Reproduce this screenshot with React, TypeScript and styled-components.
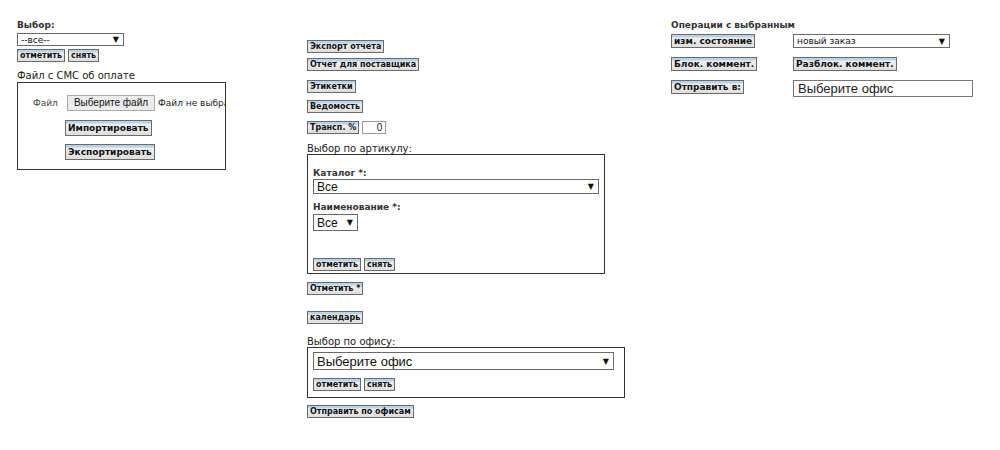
import styled, { createGlobalStyle } from "styled-components";

const GlobalStyle = createGlobalStyle`
  body {
    margin: 0;
    background: #fff;
    font-family: "DejaVu Sans", Verdana, sans-serif;
    color: #222;
  }
`;

const Page = styled.div`
  display: flex;
  width: 1000px;
  height: 450px;
  padding-left: 17px;
  box-sizing: border-box;
`;

const Column = styled.div<{ $width: number; $top: number }>`
  width: ${(p) => p.$width}px;
  padding-top: ${(p) => p.$top}px;
  display: flex;
  flex-direction: column;
  align-items: flex-start;
`;

const SmallLabel = styled.div<{ $gap?: number }>`
  font-size: 9px;
  font-weight: bold;
  color: #333;
  line-height: 11px;
  margin-top: ${(p) => p.$gap ?? 0}px;
`;

const Caption = styled.div<{ $gap?: number }>`
  font-size: 10px;
  color: #222;
  line-height: 12px;
  margin-top: ${(p) => p.$gap ?? 0}px;
`;

const sizes = {
  sm: { font: 8, line: 11, pad: "0 2px" },
  md: { font: 9, line: 12, pad: "0 2px" },
  lg: { font: 9, line: 12, pad: "1px 2px" },
};

const Btn = styled.button<{ $size?: keyof typeof sizes; $gap?: number; $indent?: number }>`
  font-family: "DejaVu Sans", Verdana, sans-serif;
  font-weight: bold;
  font-size: ${(p) => sizes[p.$size ?? "sm"].font}px;
  line-height: ${(p) => sizes[p.$size ?? "sm"].line}px;
  padding: ${(p) => sizes[p.$size ?? "sm"].pad};
  color: #111;
  margin: ${(p) => p.$gap ?? 0}px 0 0 ${(p) => p.$indent ?? 0}px;
  border: 1px solid #6a6a6a;
  background: linear-gradient(to bottom, #b9d3ea 0, #b9d3ea 2px, #efefef 3px, #dedede 100%);
  white-space: nowrap;
  justify-self: start;
  cursor: pointer;
`;

const Row = styled.div<{ $gap?: number; $space?: number }>`
  display: flex;
  align-items: center;
  gap: ${(p) => p.$space ?? 3}px;
  margin-top: ${(p) => p.$gap ?? 0}px;
`;

const SelectBox = styled.div<{ $width: number; $height: number; $font: number; $gap?: number; $family?: string }>`
  width: ${(p) => p.$width}px;
  height: ${(p) => p.$height}px;
  margin-top: ${(p) => p.$gap ?? 0}px;
  box-sizing: border-box;
  border: 1px solid #6a6a6a;
  background: #fff;
  display: flex;
  align-items: center;
  justify-content: space-between;
  padding: 0 4px 0 3px;
  font-family: ${(p) => p.$family ?? '"Liberation Sans", Arial, sans-serif'};
  font-size: ${(p) => p.$font}px;
  color: #111;
`;

const Arrow = styled.span`
  font-size: 8px;
  color: #111;
  font-family: "DejaVu Sans", sans-serif;
`;

const Panel = styled.div<{ $width: number; $height: number; $gap?: number }>`
  width: ${(p) => p.$width}px;
  height: ${(p) => p.$height}px;
  box-sizing: border-box;
  border: 1px solid #333;
  margin-top: ${(p) => p.$gap ?? 0}px;
  display: flex;
  flex-direction: column;
  align-items: flex-start;
  padding: 0 5px;
`;

const FilePanel = styled(Panel)`
  padding: 12px 0 0 15px;
  overflow: hidden;
`;

const FileRow = styled.div`
  display: flex;
  align-items: center;
  white-space: nowrap;
`;

const FileLabel = styled.span`
  font-size: 9px;
  color: #444;
  margin-right: 9px;
`;

const FileButton = styled.span`
  font-family: "Liberation Sans", Arial, sans-serif;
  font-size: 10px;
  line-height: 14px;
  padding: 0 6px;
  border: 1px solid #aaa;
  background: #ececec;
  color: #111;
  white-space: nowrap;
  flex-shrink: 0;
`;

const FileStatus = styled.span`
  font-size: 9px;
  color: #222;
  white-space: nowrap;
  margin-left: 3px;
  flex-shrink: 0;
`;

const NumberInput = styled.div`
  width: 24px;
  height: 13px;
  box-sizing: border-box;
  border: 1px solid #999;
  font-family: "Liberation Sans", Arial, sans-serif;
  font-size: 10px;
  line-height: 11px;
  text-align: right;
  padding-right: 3px;
`;

const TextInput = styled.div`
  width: 180px;
  height: 17px;
  box-sizing: border-box;
  border: 1px solid #777;
  font-family: "Liberation Sans", Arial, sans-serif;
  font-size: 13px;
  line-height: 15px;
  padding-left: 4px;
`;

const OpsGrid = styled.div`
  display: grid;
  grid-template-columns: 122px auto;
  row-gap: 9px;
  margin-top: 3px;
  align-items: start;
`;

export default function App() {
  return (
    <>
      <GlobalStyle />
      <Page>
        <Column $width={290} $top={20}>
          <SmallLabel>Выбор:</SmallLabel>
          <SelectBox $width={107} $height={13} $font={9} $gap={2} $family='"DejaVu Sans", sans-serif'>
            <span>--все--</span>
            <Arrow>▼</Arrow>
          </SelectBox>
          <Row $gap={3}>
            <Btn>отметить</Btn>
            <Btn>снять</Btn>
          </Row>
          <Caption $gap={8}>Файл с СМС об оплате</Caption>
          <FilePanel $width={209} $height={88}>
            <FileRow>
              <FileLabel>Файл</FileLabel>
              <FileButton>Выберите файл</FileButton>
              <FileStatus>Файл не выбран</FileStatus>
            </FileRow>
            <Btn $size="lg" $gap={9} $indent={32}>Импортировать</Btn>
            <Btn $size="lg" $gap={8} $indent={32}>Экспортировать</Btn>
          </FilePanel>
        </Column>

        <Column $width={364} $top={40}>
          <Btn>Экспорт отчета</Btn>
          <Btn $gap={5}>Отчет для поставщика</Btn>
          <Btn $gap={9}>Этикетки</Btn>
          <Btn $gap={7}>Ведомость</Btn>
          <Row $gap={8}>
            <Btn>Трансп. %</Btn>
            <NumberInput>0</NumberInput>
          </Row>
          <Caption $gap={9}>Выбор по артикулу:</Caption>
          <Panel $width={298} $height={120} $gap={-1}>
            <SmallLabel $gap={13}>Каталог *:</SmallLabel>
            <SelectBox $width={286} $height={15} $font={12}>
              <span>Все</span>
              <Arrow>▼</Arrow>
            </SelectBox>
            <SmallLabel $gap={8}>Наименование *:</SmallLabel>
            <SelectBox $width={45} $height={17} $font={12} $gap={1}>
              <span>Все</span>
              <Arrow>▼</Arrow>
            </SelectBox>
            <Row $gap={27}>
              <Btn>отметить</Btn>
              <Btn>снять</Btn>
            </Row>
          </Panel>
          <Btn $gap={8}>Отметить *</Btn>
          <Btn $gap={16}>календарь</Btn>
          <Caption $gap={12}>Выбор по офису:</Caption>
          <Panel $width={318} $height={51} $gap={-1}>
            <SelectBox $width={301} $height={18} $font={13} $gap={4}>
              <span>Выберите офис</span>
              <Arrow>▼</Arrow>
            </SelectBox>
            <Row $gap={8}>
              <Btn>отметить</Btn>
              <Btn>снять</Btn>
            </Row>
          </Panel>
          <Btn $gap={7}>Отправить по офисам</Btn>
        </Column>

        <Column $width={320} $top={20}>
          <SmallLabel>Операции с выбранным</SmallLabel>
          <OpsGrid>
            <Btn $size="md">изм. состояние</Btn>
            <SelectBox $width={157} $height={14} $font={9} $family='"DejaVu Sans", sans-serif'>
              <span>новый заказ</span>
              <Arrow>▼</Arrow>
            </SelectBox>
            <Btn $size="md">Блок. коммент.</Btn>
            <Btn $size="md">Разблок. коммент.</Btn>
            <Btn $size="md">Отправить в:</Btn>
            <TextInput>Выберите офис</TextInput>
          </OpsGrid>
        </Column>
      </Page>
    </>
  );
}
